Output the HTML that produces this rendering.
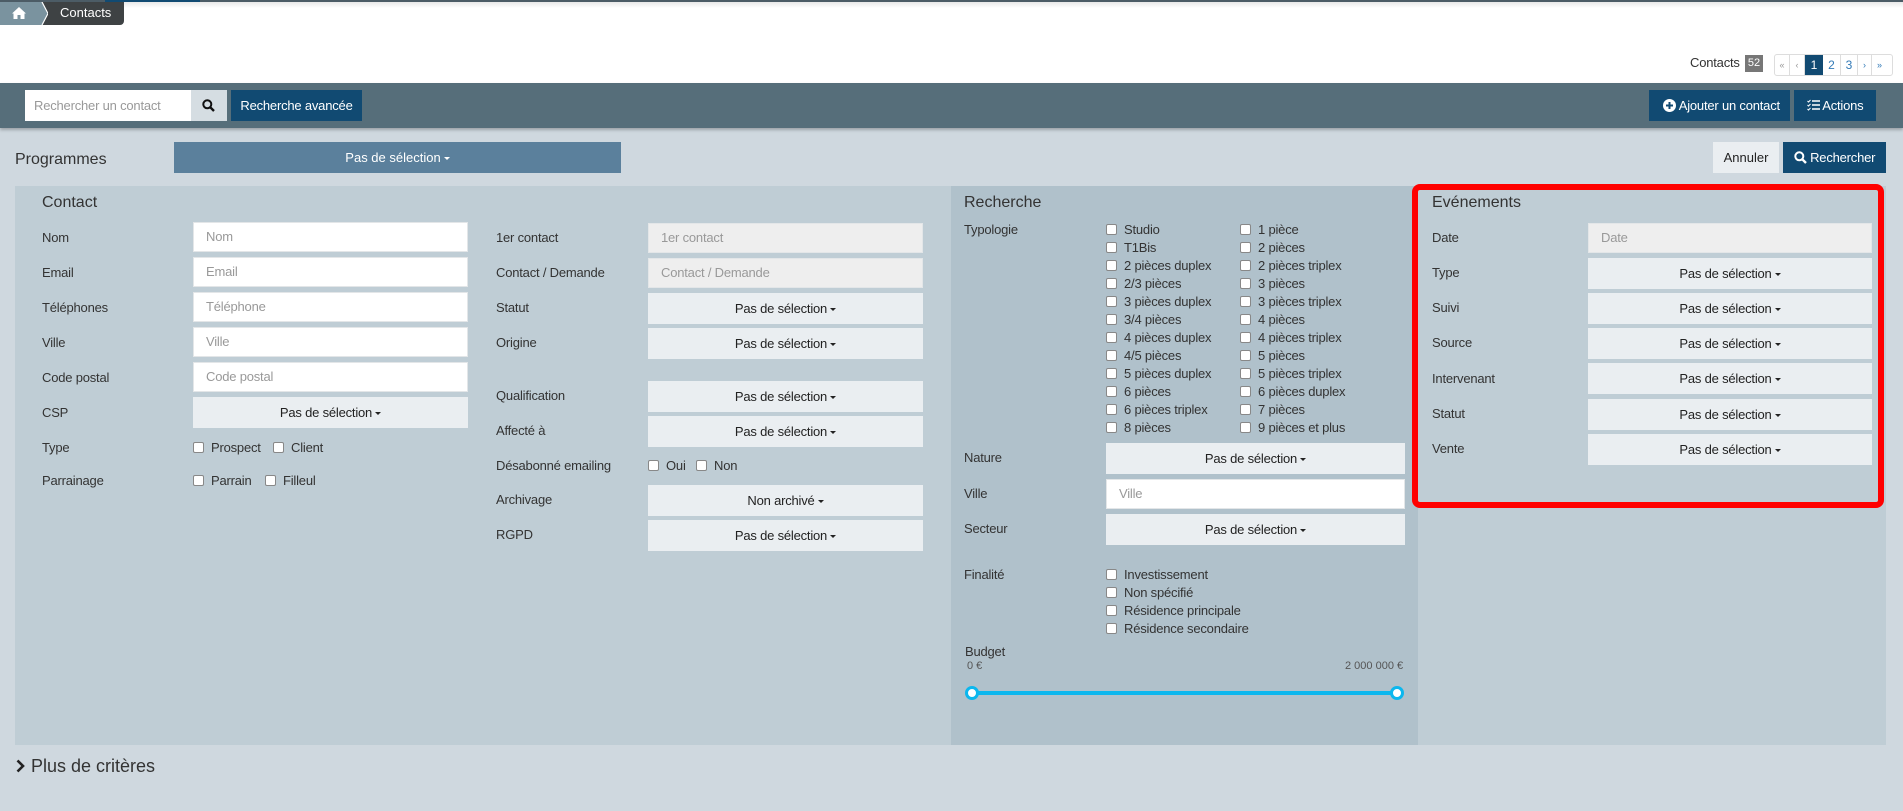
<!DOCTYPE html>
<html><head><meta charset="utf-8"><style>
*{box-sizing:border-box;margin:0;padding:0}
body{width:1903px;height:811px;position:relative;overflow:hidden;background:#cfd8df;font-family:"Liberation Sans",sans-serif;font-size:13px;color:#333}
.a{position:absolute}
.lbl{position:absolute;font-size:13px;color:#333;line-height:16px;letter-spacing:-0.2px}
.inp{position:absolute;height:30px;background:#fff;border:1px solid #e3e6e8;color:#999;font-size:13px;line-height:28px;padding-left:12px;letter-spacing:-0.2px}
.dis{background:#eeeeee;color:#999}
.dd{position:absolute;height:31px;background:#eaeef1;color:#222;font-size:13px;line-height:31px;text-align:center;letter-spacing:-0.2px}
.car{display:inline-block;width:0;height:0;border-left:3px solid transparent;border-right:3px solid transparent;border-top:3px solid #222;vertical-align:middle;margin-left:3px}
.cb{position:absolute;font-size:13px;line-height:16px;color:#333;white-space:nowrap;letter-spacing:-0.2px}
.cb i{display:inline-block;width:11px;height:11px;background:#fff;border:1px solid #888;border-radius:2px;vertical-align:-1px;margin-right:7px}
.btn{position:absolute;background:#114a72;color:#fff;font-size:13px;line-height:31px;text-align:center;letter-spacing:-0.2px}
</style></head><body>
<!-- top -->
<div class="a" style="left:0;top:0;width:1903px;height:83px;background:#fff"></div>
<div class="a" style="left:0;top:0;width:1903px;height:2px;background:#4c5c66"></div>
<div class="a" style="left:105px;top:0;width:95px;height:2px;background:#114a72"></div>
<div class="a" style="left:0;top:2px;width:1903px;height:6px;background:linear-gradient(#e8e8e8,#fff)"></div>
<div class="a" style="left:0;top:2px;width:42px;height:23px;background:#7a939f"></div>
<svg class="a" style="left:11px;top:6px" width="16" height="14" viewBox="0 0 16 14"><path d="M8 1 L1 7.5 L2.5 7.5 L2.5 13 L6.5 13 L6.5 9 L9.5 9 L9.5 13 L13.5 13 L13.5 7.5 L15 7.5 Z" fill="#fff"/></svg>
<div class="a" style="left:42px;top:2px;width:82px;height:23px;background:#3e4244;border-radius:0 0 4px 0;color:#fff;font-size:13px;line-height:22px;padding-left:18px">Contacts</div>
<svg class="a" style="left:34px;top:2px" width="14" height="23"><path d="M0 0 L8 0 L14 11.5 L8 23 L0 23 L6 11.5Z" fill="#7a939f"/><path d="M8 0 L14 11.5 L8 23" stroke="#fff" stroke-width="1.2" fill="none"/></svg>
<!-- pagination -->
<div class="lbl" style="left:1690px;top:55px">Contacts</div>
<div class="a" style="left:1745px;top:55px;width:18px;height:17px;background:#777;color:#fff;font-size:11px;line-height:17px;text-align:center">52</div>
<div class="a" style="left:1774px;top:54px;width:119px;height:22px;border:1px solid #ddd;border-radius:3px;background:#fff;font-size:12px;color:#337ab7;display:flex">
<span style="width:15px;text-align:center;line-height:20px;border-right:1px solid #ddd;color:#999;font-size:9px">«</span>
<span style="width:15px;text-align:center;line-height:20px;border-right:1px solid #ddd;color:#999;font-size:9px">‹</span>
<span style="width:18px;text-align:center;line-height:20px;background:#114a72;color:#fff">1</span>
<span style="width:18px;text-align:center;line-height:20px;border-right:1px solid #ddd">2</span>
<span style="width:17px;text-align:center;line-height:20px;border-right:1px solid #ddd">3</span>
<span style="width:14px;text-align:center;line-height:20px;border-right:1px solid #ddd;font-size:9px">›</span>
<span style="width:15px;text-align:center;line-height:20px;font-size:9px">»</span></div>
<!-- toolbar -->
<div class="a" style="left:0;top:83px;width:1903px;height:45px;background:#566e7a;box-shadow:0 2px 3px rgba(0,0,0,.25)"></div>
<div class="a" style="left:25px;top:90px;width:166px;height:31px;background:#fff;color:#999;line-height:31px;padding-left:9px;font-size:13px;letter-spacing:-0.2px">Rechercher un contact</div>
<div class="a" style="left:191px;top:90px;width:36px;height:31px;background:#d5dde2"></div>
<svg class="a" style="left:202px;top:99px" width="13" height="13"><circle cx="5.3" cy="5.3" r="4" stroke="#111" stroke-width="2" fill="none"/><path d="M8.3 8.3 L12 12" stroke="#111" stroke-width="2.4"/></svg>
<div class="btn" style="left:231px;top:90px;width:131px">Recherche avancée</div>
<div class="btn" style="left:1649px;top:90px;width:141px;padding-left:4px"><svg width="13" height="13" style="vertical-align:-2px"><circle cx="6.5" cy="6.5" r="6.5" fill="#fff"/><path d="M6.5 3v7M3 6.5h7" stroke="#114a72" stroke-width="2"/></svg> Ajouter un contact</div>
<div class="btn" style="left:1794px;top:90px;width:82px"><svg width="13" height="12" style="vertical-align:-1px"><path d="M5 2h8M5 6h8M5 10h8" stroke="#fff" stroke-width="1.6"/><path d="M0.5 2l1 1 2-2M0.5 6l1 1 2-2M0.5 10l1 1 2-2" stroke="#fff" stroke-width="1" fill="none"/></svg> Actions</div>
<!-- programmes -->
<div class="a" style="left:15px;top:151px;font-size:16px;color:#333">Programmes</div>
<div class="a" style="left:174px;top:142px;width:447px;height:31px;background:#5b809c;color:#fff;line-height:31px;text-align:center;font-size:13px">Pas de sélection<span class="car" style="border-top-color:#fff"></span></div>
<div class="a" style="left:1713px;top:142px;width:66px;height:31px;background:#eaeef1;color:#222;line-height:31px;text-align:center">Annuler</div>
<div class="btn" style="left:1783px;top:142px;width:103px"><svg width="13" height="13" style="vertical-align:-2px"><circle cx="5.3" cy="5.3" r="4" stroke="#fff" stroke-width="2" fill="none"/><path d="M8.3 8.3 L12 12" stroke="#fff" stroke-width="2.4"/></svg> Rechercher</div>
<!-- panels -->
<div class="a" style="left:15px;top:186px;width:936px;height:559px;background:#bfcdd5"></div>
<div class="a" style="left:951px;top:186px;width:467px;height:559px;background:#b0c1cb"></div>
<div class="a" style="left:1418px;top:186px;width:468px;height:559px;background:#bfcdd5"></div>
<!-- Contact -->
<div class="a" style="left:42px;top:194px;font-size:16px;color:#333">Contact</div>
<div class="lbl" style="left:42px;top:230px">Nom</div><div class="inp" style="left:193px;top:222px;width:275px">Nom</div>
<div class="lbl" style="left:42px;top:265px">Email</div><div class="inp" style="left:193px;top:257px;width:275px">Email</div>
<div class="lbl" style="left:42px;top:300px">Téléphones</div><div class="inp" style="left:193px;top:292px;width:275px">Téléphone</div>
<div class="lbl" style="left:42px;top:335px">Ville</div><div class="inp" style="left:193px;top:327px;width:275px">Ville</div>
<div class="lbl" style="left:42px;top:370px">Code postal</div><div class="inp" style="left:193px;top:362px;width:275px">Code postal</div>
<div class="lbl" style="left:42px;top:405px">CSP</div><div class="dd" style="left:193px;top:397px;width:275px">Pas de sélection<span class="car"></span></div>
<div class="lbl" style="left:42px;top:440px">Type</div>
<div class="cb" style="left:193px;top:440px"><i></i>Prospect</div><div class="cb" style="left:273px;top:440px"><i></i>Client</div>
<div class="lbl" style="left:42px;top:473px">Parrainage</div>
<div class="cb" style="left:193px;top:473px"><i></i>Parrain</div><div class="cb" style="left:265px;top:473px"><i></i>Filleul</div>

<div class="lbl" style="left:496px;top:230px">1er contact</div><div class="inp dis" style="left:648px;top:223px;width:275px">1er contact</div>
<div class="lbl" style="left:496px;top:265px">Contact / Demande</div><div class="inp dis" style="left:648px;top:258px;width:275px">Contact / Demande</div>
<div class="lbl" style="left:496px;top:300px">Statut</div><div class="dd" style="left:648px;top:293px;width:275px">Pas de sélection<span class="car"></span></div>
<div class="lbl" style="left:496px;top:335px">Origine</div><div class="dd" style="left:648px;top:328px;width:275px">Pas de sélection<span class="car"></span></div>
<div class="lbl" style="left:496px;top:388px">Qualification</div><div class="dd" style="left:648px;top:381px;width:275px">Pas de sélection<span class="car"></span></div>
<div class="lbl" style="left:496px;top:423px">Affecté à</div><div class="dd" style="left:648px;top:416px;width:275px">Pas de sélection<span class="car"></span></div>
<div class="lbl" style="left:496px;top:458px">Désabonné emailing</div>
<div class="cb" style="left:648px;top:458px"><i></i>Oui</div><div class="cb" style="left:696px;top:458px"><i></i>Non</div>
<div class="lbl" style="left:496px;top:492px">Archivage</div><div class="dd" style="left:648px;top:485px;width:275px">Non archivé<span class="car"></span></div>
<div class="lbl" style="left:496px;top:527px">RGPD</div><div class="dd" style="left:648px;top:520px;width:275px">Pas de sélection<span class="car"></span></div>
<!-- Recherche -->
<div class="a" style="left:964px;top:194px;font-size:16px;color:#333">Recherche</div>
<div class="lbl" style="left:964px;top:222px">Typologie</div>
<div class="cb" style="left:1106px;top:222px"><i></i>Studio</div><div class="cb" style="left:1240px;top:222px"><i></i>1 pièce</div>
<div class="cb" style="left:1106px;top:240px"><i></i>T1Bis</div><div class="cb" style="left:1240px;top:240px"><i></i>2 pièces</div>
<div class="cb" style="left:1106px;top:258px"><i></i>2 pièces duplex</div><div class="cb" style="left:1240px;top:258px"><i></i>2 pièces triplex</div>
<div class="cb" style="left:1106px;top:276px"><i></i>2/3 pièces</div><div class="cb" style="left:1240px;top:276px"><i></i>3 pièces</div>
<div class="cb" style="left:1106px;top:294px"><i></i>3 pièces duplex</div><div class="cb" style="left:1240px;top:294px"><i></i>3 pièces triplex</div>
<div class="cb" style="left:1106px;top:312px"><i></i>3/4 pièces</div><div class="cb" style="left:1240px;top:312px"><i></i>4 pièces</div>
<div class="cb" style="left:1106px;top:330px"><i></i>4 pièces duplex</div><div class="cb" style="left:1240px;top:330px"><i></i>4 pièces triplex</div>
<div class="cb" style="left:1106px;top:348px"><i></i>4/5 pièces</div><div class="cb" style="left:1240px;top:348px"><i></i>5 pièces</div>
<div class="cb" style="left:1106px;top:366px"><i></i>5 pièces duplex</div><div class="cb" style="left:1240px;top:366px"><i></i>5 pièces triplex</div>
<div class="cb" style="left:1106px;top:384px"><i></i>6 pièces</div><div class="cb" style="left:1240px;top:384px"><i></i>6 pièces duplex</div>
<div class="cb" style="left:1106px;top:402px"><i></i>6 pièces triplex</div><div class="cb" style="left:1240px;top:402px"><i></i>7 pièces</div>
<div class="cb" style="left:1106px;top:420px"><i></i>8 pièces</div><div class="cb" style="left:1240px;top:420px"><i></i>9 pièces et plus</div>
<div class="lbl" style="left:964px;top:450px">Nature</div><div class="dd" style="left:1106px;top:443px;width:299px">Pas de sélection<span class="car"></span></div>
<div class="lbl" style="left:964px;top:486px">Ville</div><div class="inp" style="left:1106px;top:479px;width:299px">Ville</div>
<div class="lbl" style="left:964px;top:521px">Secteur</div><div class="dd" style="left:1106px;top:514px;width:299px">Pas de sélection<span class="car"></span></div>
<div class="lbl" style="left:964px;top:567px">Finalité</div>
<div class="cb" style="left:1106px;top:567px"><i></i>Investissement</div>
<div class="cb" style="left:1106px;top:585px"><i></i>Non spécifié</div>
<div class="cb" style="left:1106px;top:603px"><i></i>Résidence principale</div>
<div class="cb" style="left:1106px;top:621px"><i></i>Résidence secondaire</div>
<div class="lbl" style="left:965px;top:644px">Budget</div>
<div class="a" style="left:967px;top:660px;font-size:11px;color:#555">0 €</div>
<div class="a" style="left:1345px;top:660px;font-size:11px;color:#555">2 000 000 €</div>
<div class="a" style="left:971px;top:691px;width:426px;height:4px;background:#0cb7ee"></div>
<div class="a" style="left:965px;top:686px;width:14px;height:14px;border-radius:50%;background:#fff;border:3px solid #0cb7ee"></div>
<div class="a" style="left:1390px;top:686px;width:14px;height:14px;border-radius:50%;background:#fff;border:3px solid #0cb7ee"></div>
<!-- Evenements -->
<div class="a" style="left:1412px;top:184px;width:472px;height:324px;border:6px solid #f00;border-radius:8px"></div>
<div class="a" style="left:1432px;top:194px;font-size:16px;color:#333">Evénements</div>
<div class="lbl" style="left:1432px;top:230px">Date</div><div class="inp dis" style="left:1588px;top:223px;width:284px">Date</div>
<div class="lbl" style="left:1432px;top:265px">Type</div><div class="dd" style="left:1588px;top:258px;width:284px">Pas de sélection<span class="car"></span></div>
<div class="lbl" style="left:1432px;top:300px">Suivi</div><div class="dd" style="left:1588px;top:293px;width:284px">Pas de sélection<span class="car"></span></div>
<div class="lbl" style="left:1432px;top:335px">Source</div><div class="dd" style="left:1588px;top:328px;width:284px">Pas de sélection<span class="car"></span></div>
<div class="lbl" style="left:1432px;top:371px">Intervenant</div><div class="dd" style="left:1588px;top:363px;width:284px">Pas de sélection<span class="car"></span></div>
<div class="lbl" style="left:1432px;top:406px">Statut</div><div class="dd" style="left:1588px;top:399px;width:284px">Pas de sélection<span class="car"></span></div>
<div class="lbl" style="left:1432px;top:441px">Vente</div><div class="dd" style="left:1588px;top:434px;width:284px">Pas de sélection<span class="car"></span></div>
<!-- plus -->
<svg class="a" style="left:16px;top:759px" width="9" height="14"><path d="M1.5 1.5 L7 7 L1.5 12.5" stroke="#222" stroke-width="2.6" fill="none"/></svg>
<div class="a" style="left:31px;top:756px;font-size:18px;color:#333">Plus de critères</div>
</body></html>
